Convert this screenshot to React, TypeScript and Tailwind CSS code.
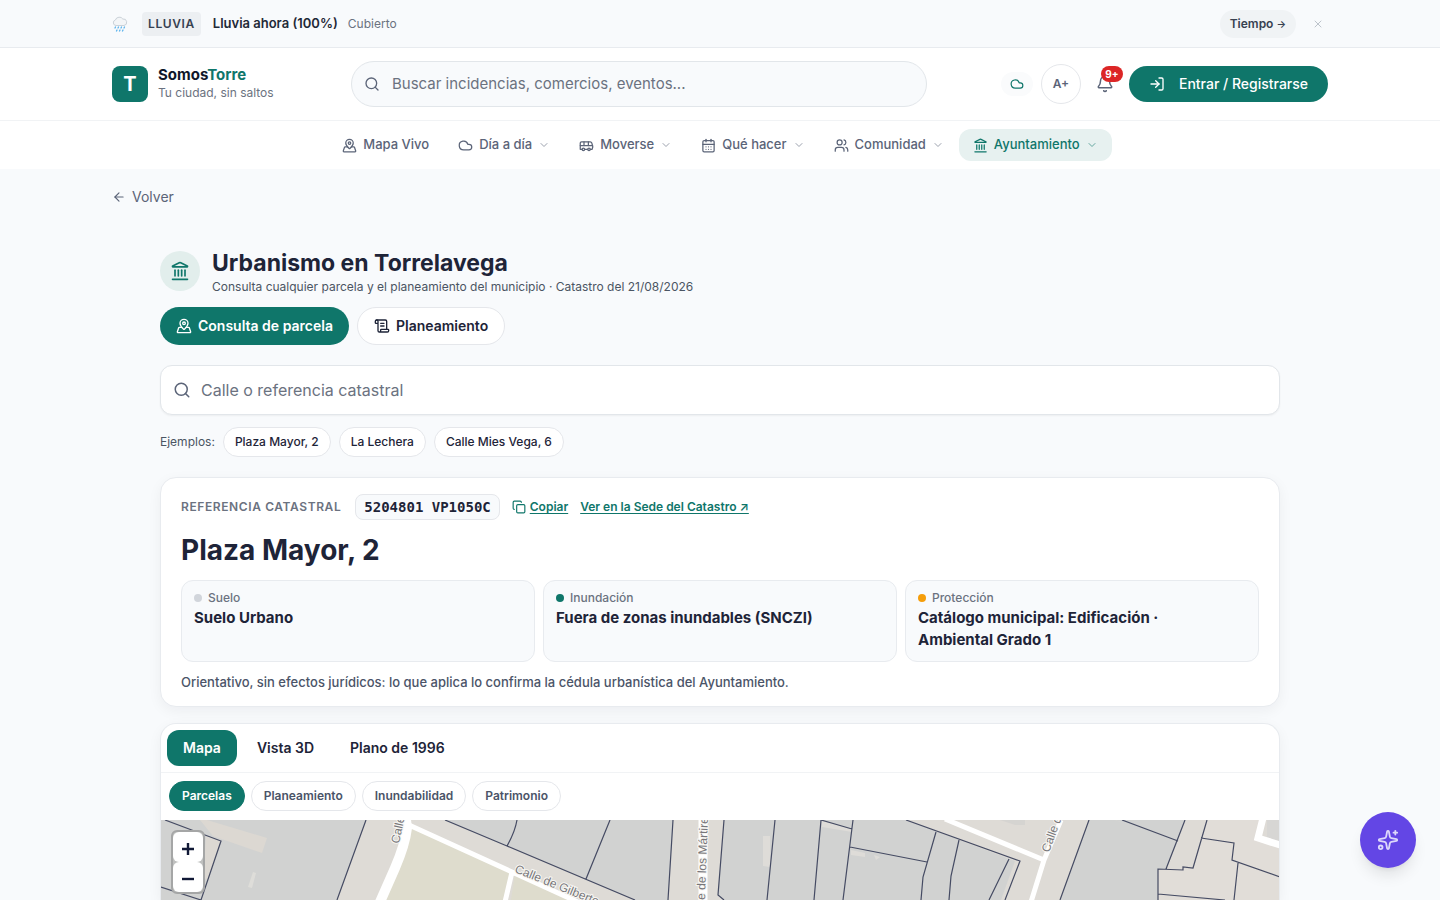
import type { ReactNode } from "react";
import {
  ArrowLeft,
  Bell,
  Bus,
  CalendarDays,
  ChevronDown,
  Cloud,
  Copy,
  Landmark,
  LogIn,
  MapPinned,
  ScrollText,
  Search,
  Sparkles,
  Users,
  X,
  type LucideIcon,
} from "lucide-react";

type NavEntry = { label: string; icon: LucideIcon; menu: boolean; active?: boolean };

const navEntries: NavEntry[] = [
  { label: "Mapa Vivo", icon: MapPinned, menu: false },
  { label: "Día a día", icon: Cloud, menu: true },
  { label: "Moverse", icon: Bus, menu: true },
  { label: "Qué hacer", icon: CalendarDays, menu: true },
  { label: "Comunidad", icon: Users, menu: true },
  { label: "Ayuntamiento", icon: Landmark, menu: true, active: true },
];

const facts = [
  { label: "Suelo", value: "Suelo Urbano", dot: "bg-[#d1d5db]" },
  { label: "Inundación", value: "Fuera de zonas inundables (SNCZI)", dot: "bg-[#0f766a]" },
  { label: "Protección", value: "Catálogo municipal: Edificación · Ambiental Grado 1", dot: "bg-[#f59e0b]" },
];

function RainCloud() {
  return (
    <svg viewBox="0 0 16 16" className="size-4 shrink-0" aria-hidden="true">
      <path
        d="M4 9.500A2.800 2.800 0 0 1 3.400 4 4 4 0 0 1 7 1.200 3.800 3.800 0 0 1 10.800 3 3.200 3.200 0 0 1 12 9.500Z"
        fill="#f3f5f7"
        stroke="#cbd2d9"
        strokeWidth="1"
      />
      <path
        d="M3.500 11l-.5 1M6.500 11l-.5 1M9.500 11l-.5 1M12.500 11l-.5 1M5 14l-.5 1M8 14l-.5 1M11 14l-.5 1"
        stroke="#5cb3ec"
        strokeWidth="1.300"
        strokeLinecap="round"
      />
    </svg>
  );
}

function WeatherBanner() {
  return (
    <div className="border-b border-[#e8ebef] bg-[#f8fafc]">
      <div className="mx-auto flex h-[47px] max-w-7xl items-center px-8">
        <RainCloud />
        <span className="ml-3.5 rounded bg-[#eceff2] px-1.5 py-1 text-xs leading-4 font-semibold tracking-wider text-[#374151]">
          LLUVIA
        </span>
        <span className="ml-3 text-[13px] font-semibold text-[#1f2937]">Lluvia ahora (100%)</span>
        <span className="ml-2.5 text-xs text-[#6b7280]">Cubierto</span>
        <a
          href="#tiempo"
          className="ml-auto rounded-full bg-[#f0f3f5] px-2.5 py-1.5 text-xs leading-4 font-semibold text-[#374151]"
        >
          Tiempo <span className="text-[10px]">→</span>
        </a>
        <button type="button" aria-label="Cerrar aviso" className="mr-1 ml-4 flex size-3 items-center justify-center text-[#b4bac3]">
          <X className="size-3" strokeWidth={1.75} />
        </button>
      </div>
    </div>
  );
}

function Header() {
  return (
    <header className="border-b border-[#f1f3f5] bg-white">
      <div className="mx-auto flex h-[72px] max-w-7xl items-center px-8">
        <a href="#inicio" className="flex w-[239px] items-center gap-2.5">
          <span className="flex size-9 items-center justify-center rounded-lg bg-[#0f766a] text-xl font-bold text-white">
            T
          </span>
          <span className="flex flex-col pb-0.5">
            <span className="text-[15px] leading-5 font-bold text-[#0f172a]">
              Somos<span className="text-[#0f766a]">Torre</span>
            </span>
            <span className="text-xs leading-4 text-[#6b7280]">Tu ciudad, sin saltos</span>
          </span>
        </a>
        <label className="flex h-[46px] w-[576px] items-center gap-3 rounded-full border border-[#e2e6ea] bg-[#f8fafc] px-3">
          <Search className="size-4 shrink-0 text-[#5b6478]" strokeWidth={2} />
          <input
            type="search"
            aria-label="Buscar"
            placeholder="Buscar incidencias, comercios, eventos..."
            className="w-full bg-transparent text-[15px] text-[#1f2937] outline-none placeholder:text-[#6b7280]"
          />
        </label>
        <div className="ml-auto flex items-center">
          <a
            href="#tiempo"
            aria-label="El tiempo"
            className="mr-2 flex h-6 w-8 items-center justify-center rounded-full bg-[#fafbfc] text-[#0f766a]"
          >
            <Cloud className="size-3.5" strokeWidth={2} />
          </a>
          <button
            type="button"
            aria-label="Aumentar texto"
            className="flex size-10 items-center justify-center rounded-full border border-[#e5e7eb] text-xs font-semibold text-[#5b6478]"
          >
            A+
          </button>
          <button
            type="button"
            aria-label="Notificaciones"
            className="relative flex size-12 items-center justify-center text-[#5b6478]"
          >
            <Bell className="size-[18px]" strokeWidth={2} />
            <span className="absolute top-1.5 right-1.5 flex h-4 min-w-5.5 items-center justify-center rounded-full bg-[#dc2626] px-1 text-[10px] font-bold text-white">
              9+
            </span>
          </button>
          <button
            type="button"
            className="flex h-9 w-[199px] items-center justify-center gap-3.5 rounded-full bg-[#0f766a] text-sm font-medium text-white"
          >
            <LogIn className="size-4" strokeWidth={2} />
            Entrar / Registrarse
          </button>
        </div>
      </div>
    </header>
  );
}

function MainNav() {
  return (
    <nav aria-label="Principal" className="bg-white">
      <div className="flex h-12 items-center justify-center gap-px">
        {navEntries.map(({ label, icon: Icon, menu, active }) => (
          <a
            key={label}
            href={`#${label}`}
            className={
              active
                ? "flex h-8 items-center rounded-xl bg-[#e7f1f0] px-3.5 text-[13px] font-medium text-[#0f766a]"
                : "flex h-8 items-center px-3.5 text-[13px] font-medium text-[#5b6478]"
            }
          >
            <Icon className="mr-1.5 size-[15px]" strokeWidth={2} />
            {label}
            {menu && <ChevronDown className="ml-1.5 size-3 opacity-60" strokeWidth={2} />}
          </a>
        ))}
      </div>
    </nav>
  );
}

function Example({ children }: { children: ReactNode }) {
  return (
    <button
      type="button"
      className="h-[30px] rounded-full border border-[#e5e7eb] bg-white px-[11px] text-xs font-medium text-[#1e2438]"
    >
      {children}
    </button>
  );
}

function ParcelCard() {
  return (
    <section className="mt-5 rounded-2xl border border-[#e8ebef] bg-white px-5 pt-4 pb-3.5 shadow-[0_4px_14px_rgba(15,23,42,0.05)]">
      <div className="flex h-[26px] items-center gap-3">
        <span className="mr-0.5 text-xs font-semibold tracking-wider text-[#6b7280]">REFERENCIA CATASTRAL</span>
        <code className="flex h-[26px] items-center rounded-lg border border-[#e5e7eb] bg-[#f8fafc] px-2 font-['DejaVu_Sans_Mono',monospace] text-sm font-bold text-[#1e2438]">
          5204801 VP1050C
        </code>
        <button type="button" className="flex items-center gap-1 text-xs font-semibold text-[#0f766a]">
          <Copy className="size-3.5" strokeWidth={2} />
          <span className="underline underline-offset-2">Copiar</span>
        </button>
        <a href="#catastro" className="text-xs font-semibold text-[#0f766a] underline underline-offset-2">
          Ver en la Sede del Catastro ↗
        </a>
      </div>
      <h2 className="mt-3 text-[28px] leading-9 font-bold text-[#1e2438]">Plaza Mayor, 2</h2>
      <dl className="mt-3 grid grid-cols-3 gap-2">
        {facts.map((fact) => (
          <div key={fact.label} className="h-[82px] rounded-xl border border-[#e8ebef] bg-[#f8fafc] px-3 pt-2">
            <dt className="flex items-center gap-1.5 text-xs leading-4.5 font-medium text-[#6b7280]">
              <span className={`size-2 rounded-full ${fact.dot}`} />
              {fact.label}
            </dt>
            <dd className="max-w-[290px] text-[15px] leading-[22px] font-bold text-[#1e2438]">{fact.value}</dd>
          </div>
        ))}
      </dl>
      <p className="mt-2.5 text-[13px] leading-5 font-medium text-[#4b5468]">
        Orientativo, sin efectos jurídicos: lo que aplica lo confirma la cédula urbanística del Ayuntamiento.
      </p>
    </section>
  );
}

function StreetLabel({ x, y, angle, children }: { x: number; y: number; angle: number; children: string }) {
  return (
    <text
      x={x}
      y={y}
      transform={`rotate(${angle} ${x} ${y})`}
      className="fill-[#77767a] stroke-[#f7f6f3] font-['Liberation_Sans',sans-serif] text-xs [paint-order:stroke] [stroke-width:2]"
    >
      {children}
    </text>
  );
}

function CadastralMap() {
  return (
    <svg
      viewBox="161 820 1118 80"
      preserveAspectRatio="xMinYMin slice"
      className="absolute inset-0 size-full"
      role="img"
      aria-label="Mapa de parcelas"
    >
      <rect x="161" y="820" width="1118" height="600" fill="#dedbd6" />
      <g fill="#d1d2d1">
        <path d="M165 820H366L337 900H201L221 841Z" />
        <path d="M161 887L201 900H161Z" />
        <path d="M445 820H673L668 900H635L507 846Z" />
        <path d="M724 820H906L1015 861L1001 900H723L718 895Z" />
        <path d="M1089 820H1115L1185 841L1166 869H1158V900H1060Z" />
        <path d="M1115 820H1185L1178 841Z" />
      </g>
      <path d="M161 820H165L221 841L201 900L161 887Z" fill="#d1d2d1" />
      <path d="M200 820H207L267 838L262 853L213 836Z" fill="#dcd8d2" />
      <path d="M253 872L256 873L252 888L248 887Z" fill="#deddd9" />
      <path d="M206 836L221 841L208 880L203 878Z" fill="#dcd8d2" />
      <path d="M763 836H770V867L763 866Z" fill="#dedcd8" />
      <path d="M822 821L852 829V832L822 827Z" fill="#dedcd8" />
      <path d="M851 850L865 853V857L851 855Z M874 855L880 857L876 860Z" fill="#dedcd8" />
      <path d="M409 825L510 873L503 900H386L408 847Z" fill="#dedccd" />
      <path d="M515 874L572 900H511Z" fill="#dedccd" />
      <path d="M1000 820H1025V825H1015Z" fill="#d5d4d1" />
      <path d="M1207 820H1265L1256 838L1279 845V875L1237 863L1232 860L1234 843L1201 838Z" fill="#e1ddd8" />
      <path d="M1158 869H1182L1193 868L1201 838L1234 843L1232 860L1279 876V900H1158Z" fill="#e1ddd8" />
      <path d="M1178 841L1185 820H1207L1193 868L1166 869Z" fill="#dedbd6" />
      <path d="M1267 820H1279V841L1267 837Z" fill="#d7d6d4" />
      <g fill="none" stroke="#fff">
        <path d="M406 820L407 828Q405 845 395 868L380 902" strokeWidth="10" />
        <path d="M409 825L512 872L580 903M512 872L505 902" strokeWidth="5" />
        <path d="M703 820V900" strokeWidth="9" />
        <path d="M945 819L1044 860M1061 820L1044 860L1031 902" strokeWidth="5" />
        <path d="M1263 818L1258 838L1280 845" strokeWidth="7" />
      </g>
      <g fill="none" stroke="#454b63" strokeWidth="1.200">
        <path d="M165 820L221 841L201 900M161 887L201 900M366 820L337 900" />
        <path d="M445 820L507 846L635 900M517 820Q515 832 507 846M610 820L586 879M673 820L668 900" />
        <path d="M724 820L718 895L724 900M775 820L767 900M821 820L814 900M821 820L852 829M853 820L843 900M850 847L927 862M906 820L1020 861L1005 900" />
        <path d="M936 832L923 877L921 900M959 840L951 876L949 900M1009 859L989 900" />
        <path d="M1089 820L1060 900M1122 820L1178 841M1185 820L1166 869M1207 820L1193 868L1183 867V870L1158 869V900M1158 894L1225 900M1201 838L1234 843L1232 860L1280 877M1238 863L1234 900" />
      </g>
      <StreetLabel x={399} y={844} angle={-78}>Calle</StreetLabel>
      <StreetLabel x={514} y={872} angle={22}>Calle de Gilberto</StreetLabel>
      <StreetLabel x={705} y={900} angle={-88}>e de los Mártires</StreetLabel>
      <StreetLabel x={1049} y={853} angle={-70}>Calle de</StreetLabel>
    </svg>
  );
}

function MapCard() {
  const layers = ["Planeamiento", "Inundabilidad", "Patrimonio"];
  return (
    <section className="mt-4 flex flex-1 flex-col overflow-hidden rounded-t-2xl border border-b-0 border-[#e8ebef] bg-white shadow-[0_4px_14px_rgba(15,23,42,0.05)]">
      <div className="flex h-[49px] items-center gap-1 border-b border-[#f1f3f5] px-1.5 text-sm font-semibold text-[#1e2438]">
        <button type="button" className="h-9 rounded-xl bg-[#0f766a] px-4 text-white">
          Mapa
        </button>
        <button type="button" className="h-9 px-4">
          Vista 3D
        </button>
        <button type="button" className="h-9 px-4">
          Plano de 1996
        </button>
      </div>
      <div className="flex h-[47px] items-start gap-1.5 px-2 pt-2 text-xs font-semibold">
        <button type="button" className="h-[30px] rounded-full border border-[#0f766a] bg-[#0f766a] px-3 text-white">
          Parcelas
        </button>
        {layers.map((layer) => (
          <button
            key={layer}
            type="button"
            className="h-[30px] rounded-full border border-[#e5e7eb] bg-white px-3 text-[#4b5468]"
          >
            {layer}
          </button>
        ))}
      </div>
      <div className="relative min-h-16 flex-1 overflow-hidden">
        <CadastralMap />
        <div className="absolute top-2.5 left-2.5 rounded-md border-2 border-[#a5a6a6] bg-[#bfc0bf]">
          <button type="button" aria-label="Acercar" className="flex size-[30px] items-center justify-center rounded-md bg-white pt-1 text-[#111936]">
            <svg viewBox="0 0 14 14" className="size-3.5" aria-hidden="true">
              <path d="M1 7H13M7 1V13" stroke="currentColor" strokeWidth="2.400" />
            </svg>
          </button>
          <button type="button" aria-label="Alejar" className="flex size-[30px] items-center justify-center rounded-md bg-white pt-1 text-[#111936]">
            <svg viewBox="0 0 14 14" className="size-3.5" aria-hidden="true">
              <path d="M1 7H13" stroke="currentColor" strokeWidth="2.400" />
            </svg>
          </button>
        </div>
      </div>
    </section>
  );
}

export default function App() {
  return (
    <div className="flex min-h-screen flex-col bg-[#f8fafc] font-['Inter',sans-serif] text-[#1e2438]">
      <WeatherBanner />
      <Header />
      <MainNav />
      <main className="mx-auto flex w-full max-w-7xl flex-1 flex-col px-8">
        <a href="#volver" className="mt-[18px] flex h-5 items-center gap-1.5 text-sm text-[#5b6478]">
          <ArrowLeft className="size-3.5" strokeWidth={2} />
          Volver
        </a>
        <div className="flex flex-1 flex-col px-12 pt-10">
          <div className="flex items-center gap-3">
            <span className="flex size-10 items-center justify-center rounded-full bg-[#e2eeec] text-[#0f766a]">
              <Landmark className="size-5" strokeWidth={2} />
            </span>
            <div>
              <h1 className="text-[23px] leading-8 font-bold text-[#1e2438]">Urbanismo en Torrelavega</h1>
              <p className="text-xs leading-4 text-[#4b5563]">
                Consulta cualquier parcela y el planeamiento del municipio · Catastro del 21/08/2026
              </p>
            </div>
          </div>
          <div className="mt-3 flex gap-2 text-sm font-semibold">
            <button type="button" className="flex h-[38px] items-center gap-1.5 rounded-full bg-[#0f766a] px-4 text-white">
              <MapPinned className="size-4" strokeWidth={2} />
              Consulta de parcela
            </button>
            <button type="button" className="flex h-[38px] items-center gap-1.5 rounded-full border border-[#e5e7eb] bg-white px-4">
              <ScrollText className="size-4" strokeWidth={2} />
              Planeamiento
            </button>
          </div>
          <label className="mt-5 flex h-[50px] items-center gap-2.5 rounded-xl border border-[#e2e6ea] bg-white px-3 shadow-xs">
            <Search className="size-[18px] shrink-0 text-[#5b6478]" strokeWidth={2} />
            <input
              type="search"
              aria-label="Calle o referencia catastral"
              placeholder="Calle o referencia catastral"
              className="w-full bg-transparent text-base outline-none placeholder:text-[#6b7280]"
            />
          </label>
          <div className="mt-3 flex h-[30px] items-center gap-2">
            <span className="text-xs text-[#4b5563]">Ejemplos:</span>
            <Example>Plaza Mayor, 2</Example>
            <Example>La Lechera</Example>
            <Example>Calle Mies Vega, 6</Example>
          </div>
          <ParcelCard />
          <MapCard />
        </div>
      </main>
      <button
        type="button"
        aria-label="Asistente"
        className="fixed right-6 bottom-8 flex size-14 items-center justify-center rounded-full bg-[#6346e5] text-[#ddd8fb] shadow-lg"
      >
        <Sparkles className="size-[22px]" strokeWidth={2} />
      </button>
    </div>
  );
}
